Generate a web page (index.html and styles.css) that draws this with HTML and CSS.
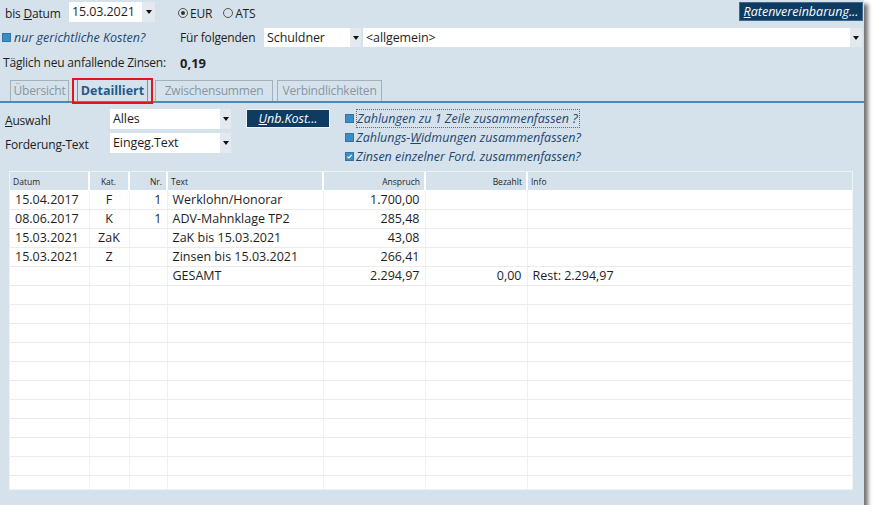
FILE: index.html
```html
<!DOCTYPE html>
<html lang="de">
<head>
<meta charset="utf-8">
<title>Zinsen</title>
<link rel="stylesheet" href="styles.css">
</head>
<body>
<div class="window">
  <div class="row r1">
    <span class="lbl lbl-datum">bis <u>D</u>atum</span>
    <div class="combo combo-date"><span class="val">15.03.2021</span><span class="arrow"><i class="tri"></i></span></div>
    <div class="radios">
      <span class="radio on"></span><span class="rlbl">EUR</span>
      <span class="radio"></span><span class="rlbl">ATS</span>
    </div>
    <button class="dark-btn btn-raten"><u>R</u>atenvereinbarung...</button>
  </div>

  <div class="row r2">
    <div class="chk-group">
      <span class="chk"></span><span class="ital">nur gerichtliche Kosten?</span>
    </div>
    <span class="lbl lbl-fuer">Für folgenden</span>
    <div class="combo combo-schuldner"><span class="val">Schuldner</span><span class="arrow"><i class="tri"></i></span></div>
    <div class="combo combo-allg"><span class="val">&lt;allgemein&gt;</span><span class="arrow"><i class="tri"></i></span></div>
  </div>

  <div class="row r3">
    <span class="lbl lbl-zinsen">Täglich neu anfallende Zinsen:</span>
    <span class="bold-val">0,19</span>
  </div>

  <div class="tabs">
    <span class="tab tab-ueb">Übersicht</span>
    <span class="tab tab-det active">Detailliert</span>
    <span class="tab tab-zw">Zwischensummen</span>
    <span class="tab tab-verb">Verbindlichkeiten</span>
    <span class="highlight"></span>
  </div>

  <div class="options">
    <div class="opt-left">
      <div class="opt-row">
        <span class="lbl lbl-opt"><u>A</u>uswahl</span>
        <div class="combo combo-opt"><span class="val">Alles</span><span class="arrow"><i class="tri"></i></span></div>
      </div>
      <div class="opt-row">
        <span class="lbl lbl-opt">Forderung-Text</span>
        <div class="combo combo-opt"><span class="val">Eingeg.Text</span><span class="arrow"><i class="tri"></i></span></div>
      </div>
    </div>
    <button class="dark-btn btn-unb"><u>U</u>nb.Kost...</button>
    <div class="opt-checks">
      <div class="chk-row"><span class="chk"></span><span class="ital focus">Zahlungen zu 1 Zeile zusammenfassen ?</span></div>
      <div class="chk-row"><span class="chk"></span><span class="ital">Zahlungs-<u>W</u>idmungen zusammenfassen?</span></div>
      <div class="chk-row"><span class="chk checked"><svg viewBox="0 0 9 9" width="9" height="9"><path d="M1.8 4.6 L3.7 6.4 L7.3 2.5" fill="none" stroke="#fff" stroke-width="1.5"/></svg></span><span class="ital">Zinsen einzelner Ford. zusammenfassen?</span></div>
    </div>
  </div>

  <div class="grid">
    <table>
      <colgroup>
        <col class="c-datum"><col class="c-kat"><col class="c-nr"><col class="c-text"><col class="c-ansp"><col class="c-bez"><col class="c-info">
      </colgroup>
      <thead>
        <tr><th class="l">Datum</th><th class="c">Kat.</th><th class="r">Nr.</th><th class="l">Text</th><th class="r">Anspruch</th><th class="r">Bezahlt</th><th class="l">Info</th></tr>
      </thead>
      <tbody>
        <tr><td class="l">15.04.2017</td><td class="c">F</td><td class="r">1</td><td class="l">Werklohn/Honorar</td><td class="r">1.700,00</td><td></td><td></td></tr>
        <tr><td class="l">08.06.2017</td><td class="c">K</td><td class="r">1</td><td class="l">ADV-Mahnklage TP2</td><td class="r">285,48</td><td></td><td></td></tr>
        <tr><td class="l">15.03.2021</td><td class="c">ZaK</td><td></td><td class="l">ZaK bis 15.03.2021</td><td class="r">43,08</td><td></td><td></td></tr>
        <tr><td class="l">15.03.2021</td><td class="c">Z</td><td></td><td class="l">Zinsen bis 15.03.2021</td><td class="r">266,41</td><td></td><td></td></tr>
        <tr><td></td><td></td><td></td><td class="l">GESAMT</td><td class="r">2.294,97</td><td class="r">0,00</td><td class="l">Rest: 2.294,97</td></tr>
        <tr><td></td><td></td><td></td><td></td><td></td><td></td><td></td></tr>
        <tr><td></td><td></td><td></td><td></td><td></td><td></td><td></td></tr>
        <tr><td></td><td></td><td></td><td></td><td></td><td></td><td></td></tr>
        <tr><td></td><td></td><td></td><td></td><td></td><td></td><td></td></tr>
        <tr><td></td><td></td><td></td><td></td><td></td><td></td><td></td></tr>
        <tr><td></td><td></td><td></td><td></td><td></td><td></td><td></td></tr>
        <tr><td></td><td></td><td></td><td></td><td></td><td></td><td></td></tr>
        <tr><td></td><td></td><td></td><td></td><td></td><td></td><td></td></tr>
        <tr><td></td><td></td><td></td><td></td><td></td><td></td><td></td></tr>
        <tr><td></td><td></td><td></td><td></td><td></td><td></td><td></td></tr>
        <tr><td></td><td></td><td></td><td></td><td></td><td></td><td></td></tr>
      </tbody>
    </table>
  </div>
</div>
</body>
</html>
```
FILE: styles.css
```css
* { box-sizing: border-box; }
body {
  margin: 0;
  background: #ffffff;
  font-family: "Open Sans", "Noto Sans", sans-serif;
  font-size: 12px;
  letter-spacing: -0.2px;
  color: #1e1e1e;
}
.window {
  position: relative;
  width: 864px;
  height: 505px;
  background: #d6e2eb;
  box-shadow: 4px 4px 4px rgba(0, 0, 0, 0.55);
  display: flex;
  flex-direction: column;
}
.row { display: flex; align-items: center; }
.lbl { white-space: nowrap; }
u { text-decoration: underline; text-underline-offset: 1px; }

/* row 1 */
.r1 { margin-top: 2px; height: 20px; padding-left: 5px; }
.lbl-datum { width: 64px; padding-top: 2px; }
.combo {
  display: flex;
  height: 19px;
  background: #ffffff;
}
.combo .val { flex: 1; padding-left: 3px; line-height: 19px; white-space: nowrap; overflow: hidden; font-size: 12.5px; letter-spacing: -0.1px; }
.combo .arrow {
  width: 12px;
  background: #e3e9ee;
  display: flex;
  align-items: center;
  justify-content: center;
}
.tri {
  width: 0; height: 0;
  border-left: 3px solid transparent;
  border-right: 3px solid transparent;
  border-top: 4px solid #111;
}
.combo-date { width: 86px; height: 20px; }
.combo-date .val { line-height: 20px; }
.combo-date .arrow { width: 13px; }
.radios { display: flex; align-items: center; margin-left: 23px; padding-top: 2px; }
.radio {
  width: 10px; height: 10px;
  border: 1px solid #555;
  border-radius: 50%;
  display: flex; align-items: center; justify-content: center;
  margin-right: 2px;
}
.radio.on::after { content: ""; width: 4px; height: 4px; border-radius: 50%; background: #333; }
.rlbl { margin-right: 11px; }
.dark-btn {
  font-family: inherit;
  font-size: 12.5px;
  letter-spacing: 0;
  font-style: italic;
  color: #ffffff;
  background: #0d3b61;
  border: 1px solid #3f6a8f;
  padding: 0;
  cursor: default;
}
.btn-raten { margin-left: auto; width: 124px; height: 19px; margin-right: 1px; align-self: flex-start; }

/* row 2 */
.r2 { margin-top: 6px; height: 19px; padding-left: 2px; }
.chk-group { width: 178px; display: flex; align-items: center; }
.chk {
  width: 9px; height: 9px;
  background: #3d8cc4;
  border: 1px solid #2f77ab;
  margin-right: 3px;
  flex: none;
  display: flex; align-items: center; justify-content: center;
}
.chk svg { display: block; }
.ital { font-style: italic; color: #1c4670; white-space: nowrap; font-size: 12.5px; letter-spacing: 0; }
.lbl-fuer { width: 84px; }
.combo-schuldner { width: 97px; }
.combo-schuldner .arrow { width: 11px; }
.combo-allg { width: 499px; margin-left: 2px; }

/* row 3 */
.r3 { margin-top: 6px; height: 19px; padding-left: 3px; }
.lbl-zinsen { width: 177px; }
.bold-val { font-weight: 700; font-size: 13px; letter-spacing: 0; }

/* tabs */
.tabs {
  position: relative;
  margin-top: 8px;
  height: 23px;
  padding-left: 10px;
  display: flex;
  align-items: flex-end;
  border-bottom: 2px solid #4f88b5;
}
.tab {
  height: 21px;
  line-height: 19px;
  border: 1px solid #a3b1bd;
  border-bottom: none;
  color: #8795a2;
  margin-right: 4px;
  white-space: nowrap;
  text-align: center;
}
.tab-ueb { width: 59px; margin-right: 8px; }
.tab-det {
  width: 71px;
  height: 22px;
  line-height: 21px;
  color: #1f5a8c;
  font-weight: 700;
  font-size: 12.5px;
  letter-spacing: 0;
  border-color: #6e93b3;
  margin-right: 7px;
}
.tab-zw { width: 118px; }
.tab-verb { width: 105px; }
.highlight {
  position: absolute;
  left: 72px;
  top: -2px;
  width: 81px;
  height: 26px;
  border: 2px solid #e0161c;
  pointer-events: none;
}

/* options */
.options {
  margin-top: 6px;
  display: flex;
  align-items: flex-start;
  height: 57px;
}
.opt-left { display: flex; flex-direction: column; gap: 4px; padding-left: 5px; }
.opt-row { display: flex; align-items: center; }
.lbl-opt { width: 105px; padding-top: 2px; }
.combo-opt { width: 121px; height: 20px; }
.combo-opt .val { line-height: 20px; }
.combo-opt .arrow { width: 11px; }
.btn-unb { width: 84px; height: 19px; margin-left: 15px; border: 1px solid #eef3f6; }
.opt-checks { margin-left: 15px; display: flex; flex-direction: column; }
.chk-row { height: 19px; display: flex; align-items: center; }
.chk-row .chk { margin-right: 2px; }
.focus { border: 1px dotted #6b6b6b; padding: 0 1px 0 0; line-height: 17px; }

/* grid */
.grid {
  margin-top: 5px;
  margin-left: 9px;
  width: 844px;
  height: 319px;
  background: #ffffff;
  border: 1px solid #edf2f5;
  overflow: hidden;
}
table { width: 100%; border-collapse: collapse; table-layout: fixed; }
.c-datum { width: 79px; }
.c-kat { width: 40px; }
.c-nr { width: 38px; }
.c-text { width: 156px; }
.c-ansp { width: 102px; }
.c-bez { width: 102px; }
th {
  height: 18px;
  background: #d6e2eb;
  font-weight: 400;
  font-size: 8.5px;
  letter-spacing: 0;
  color: #1e1e1e;
  border-right: 2px solid #ffffff;
  padding: 0 4px 0 3px;
  white-space: nowrap;
}
td {
  height: 19px;
  padding: 0 5px 0 5px;
  font-size: 12.5px;
  letter-spacing: 0;
  border-right: 1px solid #f0f0f0;
  border-bottom: 1px solid #ebebeb;
  white-space: nowrap;
  overflow: hidden;
}
th:last-child, td:last-child { border-right: none; }
.l { text-align: left; }
.c { text-align: center; }
.r { text-align: right; }
```
